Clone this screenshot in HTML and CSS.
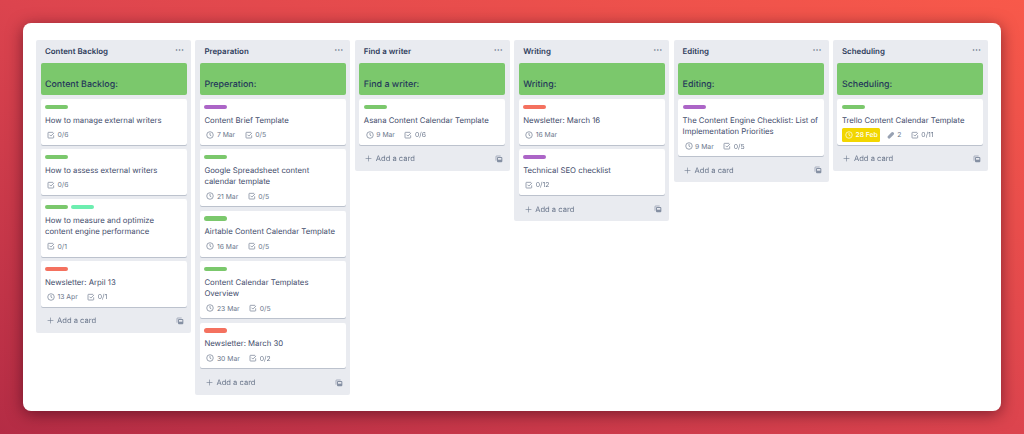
FILE: index.html
```html
<!DOCTYPE html>
<html lang="en">
<head>
    <meta charset="UTF-8">
    <meta name="viewport" content="width=device-width, initial-scale=1.0">
    <title>Content Calendar Board</title>
    <link rel="stylesheet" href="styles.css">
</head>
<body>
    <svg class="icon-defs" aria-hidden="true">
        <symbol id="i-clock" viewBox="0 0 12 12"><circle cx="6" cy="6" r="4.9" fill="none" stroke="currentColor"/><path d="M6 3v3.2l2 1.1" fill="none" stroke="currentColor"/></symbol>
        <symbol id="i-check" viewBox="0 0 12 12"><path d="M10 6.5v3.2a.8.8 0 0 1-.8.8H2.300a.8.8 0 0 1-.8-.8V2.800a.8.8 0 0 1 .8-.8h7" fill="none" stroke="currentColor"/><path d="M3.800 5.600l2 2 4.700-4.700" fill="none" stroke="currentColor"/></symbol>
        <symbol id="i-clip" viewBox="0 0 12 12"><path d="M1.500 7.500l5-5.200a2.300 2.300 0 0 1 3.400 3.200l-5 5.100a2.300 2.300 0 0 1-3.400-3.100z" fill="currentColor"/></symbol>
        <symbol id="i-plus" viewBox="0 0 12 12"><path d="M6 1v10M1 6h10" fill="none" stroke="currentColor"/></symbol>
        <symbol id="i-tpl" viewBox="0 0 12 12"><path d="M1.500 8.500V2.300a.8.8 0 0 1 .8-.8h6.200" fill="none" stroke="currentColor"/><rect x="3" y="3" width="8" height="8" rx="1.500" fill="currentColor"/><rect x="4.500" y="4.500" width="5" height="2.500" fill="#e9ebf0"/></symbol>
    </svg>

    <main class="window">
        <section class="list">
            <header class="list-head"><h2>Content Backlog</h2><span class="dots">···</span></header>
            <div class="cover"><h3>Content Backlog:</h3></div>
            <article class="card">
                <div class="labels"><i class="label green"></i></div>
                <p class="title">How to manage external writers</p>
                <div class="meta"><span><svg><use href="#i-check"/></svg>0/6</span></div>
            </article>
            <article class="card">
                <div class="labels"><i class="label green"></i></div>
                <p class="title">How to assess external writers</p>
                <div class="meta"><span><svg><use href="#i-check"/></svg>0/6</span></div>
            </article>
            <article class="card">
                <div class="labels"><i class="label green"></i><i class="label mint"></i></div>
                <p class="title">How to measure and optimize content engine performance</p>
                <div class="meta"><span><svg><use href="#i-check"/></svg>0/1</span></div>
            </article>
            <article class="card">
                <div class="labels"><i class="label red"></i></div>
                <p class="title">Newsletter: Arpil 13</p>
                <div class="meta"><span><svg><use href="#i-clock"/></svg>13 Apr</span><span><svg><use href="#i-check"/></svg>0/1</span></div>
            </article>
            <footer class="add"><svg class="plus"><use href="#i-plus"/></svg>Add a card<svg class="tpl"><use href="#i-tpl"/></svg></footer>
        </section>

        <section class="list">
            <header class="list-head"><h2>Preparation</h2><span class="dots">···</span></header>
            <div class="cover"><h3>Preperation:</h3></div>
            <article class="card">
                <div class="labels"><i class="label purple"></i></div>
                <p class="title">Content Brief Template</p>
                <div class="meta"><span><svg><use href="#i-clock"/></svg>7 Mar</span><span><svg><use href="#i-check"/></svg>0/5</span></div>
            </article>
            <article class="card">
                <div class="labels"><i class="label green"></i></div>
                <p class="title">Google Spreadsheet content calendar template</p>
                <div class="meta"><span><svg><use href="#i-clock"/></svg>21 Mar</span><span><svg><use href="#i-check"/></svg>0/5</span></div>
            </article>
            <article class="card">
                <div class="labels"><i class="label green"></i></div>
                <p class="title">Airtable Content Calendar Template</p>
                <div class="meta"><span><svg><use href="#i-clock"/></svg>16 Mar</span><span><svg><use href="#i-check"/></svg>0/5</span></div>
            </article>
            <article class="card">
                <div class="labels"><i class="label green"></i></div>
                <p class="title">Content Calendar Templates<br>Overview</p>
                <div class="meta"><span><svg><use href="#i-clock"/></svg>23 Mar</span><span><svg><use href="#i-check"/></svg>0/5</span></div>
            </article>
            <article class="card">
                <div class="labels"><i class="label red"></i></div>
                <p class="title">Newsletter: March 30</p>
                <div class="meta"><span><svg><use href="#i-clock"/></svg>30 Mar</span><span><svg><use href="#i-check"/></svg>0/2</span></div>
            </article>
            <footer class="add"><svg class="plus"><use href="#i-plus"/></svg>Add a card<svg class="tpl"><use href="#i-tpl"/></svg></footer>
        </section>

        <section class="list">
            <header class="list-head"><h2>Find a writer</h2><span class="dots">···</span></header>
            <div class="cover"><h3>Find a writer:</h3></div>
            <article class="card">
                <div class="labels"><i class="label green"></i></div>
                <p class="title">Asana Content Calendar Template</p>
                <div class="meta"><span><svg><use href="#i-clock"/></svg>9 Mar</span><span><svg><use href="#i-check"/></svg>0/6</span></div>
            </article>
            <footer class="add"><svg class="plus"><use href="#i-plus"/></svg>Add a card<svg class="tpl"><use href="#i-tpl"/></svg></footer>
        </section>

        <section class="list">
            <header class="list-head"><h2>Writing</h2><span class="dots">···</span></header>
            <div class="cover"><h3>Writing:</h3></div>
            <article class="card">
                <div class="labels"><i class="label red"></i></div>
                <p class="title">Newsletter: March 16</p>
                <div class="meta"><span><svg><use href="#i-clock"/></svg>16 Mar</span></div>
            </article>
            <article class="card">
                <div class="labels"><i class="label purple"></i></div>
                <p class="title">Technical SEO checklist</p>
                <div class="meta"><span><svg><use href="#i-check"/></svg>0/12</span></div>
            </article>
            <footer class="add"><svg class="plus"><use href="#i-plus"/></svg>Add a card<svg class="tpl"><use href="#i-tpl"/></svg></footer>
        </section>

        <section class="list">
            <header class="list-head"><h2>Editing</h2><span class="dots">···</span></header>
            <div class="cover"><h3>Editing:</h3></div>
            <article class="card">
                <div class="labels"><i class="label purple"></i></div>
                <p class="title">The Content Engine Checklist: List of Implementation Priorities</p>
                <div class="meta"><span><svg><use href="#i-clock"/></svg>9 Mar</span><span><svg><use href="#i-check"/></svg>0/5</span></div>
            </article>
            <footer class="add"><svg class="plus"><use href="#i-plus"/></svg>Add a card<svg class="tpl"><use href="#i-tpl"/></svg></footer>
        </section>

        <section class="list">
            <header class="list-head"><h2>Scheduling</h2><span class="dots">···</span></header>
            <div class="cover"><h3>Scheduling:</h3></div>
            <article class="card">
                <div class="labels"><i class="label green"></i></div>
                <p class="title">Trello Content Calendar Template</p>
                <div class="meta"><span class="due"><svg><use href="#i-clock"/></svg>28 Feb</span><span><svg class="clip"><use href="#i-clip"/></svg>2</span><span><svg><use href="#i-check"/></svg>0/11</span></div>
            </article>
            <footer class="add"><svg class="plus"><use href="#i-plus"/></svg>Add a card<svg class="tpl"><use href="#i-tpl"/></svg></footer>
        </section>
    </main>
</body>
</html>
```

FILE: styles.css
```css
html, body {
    height: 100%;
}

body {
    margin: 0;
    padding: 23px;
    box-sizing: border-box;
    overflow: hidden;
    font-family: 'Inter', sans-serif;
    text-rendering: geometricPrecision;
    color: #2f3d5c;
    background: linear-gradient(to bottom left, #f8594a 0%, #dc444e 50%, #b42c45 100%);
}

.icon-defs {
    display: none;
}

.window {
    display: flex;
    align-items: flex-start;
    gap: 4.4px;
    box-sizing: border-box;
    height: 388px;
    padding: 17px 13px;
    background: #fff;
    border-radius: 8px;
    box-shadow: 0 3px 16px rgba(50, 0, 20, 0.55);
}

.list {
    flex: 0 0 155px;
    display: flex;
    flex-direction: column;
    padding: 0 4.5px;
    box-sizing: border-box;
    background: #e9ebf0;
    border-radius: 2px;
    filter: blur(0.35px);
}

.list-head {
    display: flex;
    justify-content: space-between;
    align-items: center;
    height: 23px;
    padding: 0 2.5px 1.5px 4.5px;
    box-sizing: border-box;
}

.list-head h2 {
    margin: 0;
    font-size: 7.9px;
    font-weight: 600;
    color: #2f3d5c;
}

.dots {
    font-size: 9px;
    font-weight: 700;
    color: #6b778c;
}

.cover {
    display: flex;
    align-items: flex-end;
    height: 32px;
    box-sizing: border-box;
    padding: 0 4.5px 5.5px;
    margin-bottom: 4px;
    background: #7bc86c;
    border-radius: 2px;
}

.cover h3 {
    margin: 0;
    font-size: 8.9px;
    font-weight: 500;
    line-height: 11px;
    color: #25385a;
}

.card {
    padding: 5.5px 4.5px 4.2px;
    margin-bottom: 4.5px;
    background: #fff;
    border-radius: 2px;
    box-shadow: 0 1px 0 rgba(9, 30, 66, 0.2);
}

.labels {
    display: flex;
    gap: 2.5px;
    margin-bottom: 5.5px;
}

.label {
    display: block;
    width: 23px;
    height: 4.5px;
    border-radius: 3px;
}

.green { background: #7bc86c; }
.mint { background: #6deeb0; }
.red { background: #f4715f; }
.purple { background: #ac65c7; }

.title {
    margin: 0 0 2.5px;
    font-size: 7.75px;
    line-height: 11.5px;
    color: #3f4c6b;
}

.meta {
    display: flex;
    align-items: center;
    gap: 9.5px;
    height: 12px;
    padding-left: 2px;
    font-size: 6.8px;
    color: #6b778c;
}

.meta span {
    display: flex;
    align-items: center;
    gap: 2.5px;
}

.meta svg {
    width: 8px;
    height: 8px;
}

.meta svg.clip {
    color: #98a2b3;
}

.meta .due {
    gap: 2.5px;
    height: 14px;
    padding: 0 2.5px 0 3px;
    margin-left: -2px;
    margin-right: -3px;
    font-weight: 500;
    color: #fff;
    background: #f2d600;
    border-radius: 1.5px;
}

.add {
    display: flex;
    align-items: center;
    height: 21.7px;
    box-sizing: border-box;
    padding: 0 2.5px 2.3px 6px;
    font-size: 7.6px;
    color: #6b778c;
}

.plus {
    width: 7px;
    height: 7px;
    margin-right: 3.5px;
}

.tpl {
    width: 8px;
    height: 8px;
    margin-left: auto;
    color: #8590a3;
}
```
